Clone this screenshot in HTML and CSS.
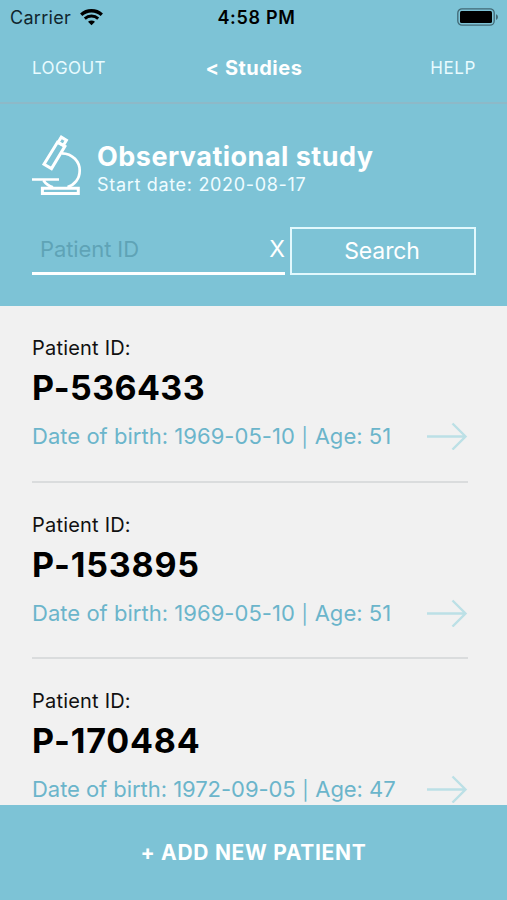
FILE: index.html
```
<!DOCTYPE html>
<html lang="en">
<head>
<meta charset="utf-8">
<title>Observational study</title>
<link rel="stylesheet" href="styles.css">
</head>
<body>
<div class="app">
  <header class="top">
    <div class="status">
      <div class="carrier">
        <span>Carrier</span>
        <svg class="wifi" width="23" height="17" viewBox="0 0 23 17" fill="none" stroke="#000">
          <path d="M1.200 5.800C7 .4 16 .4 21.800 5.800" stroke-width="3.300"/>
          <path d="M4.800 9.600C8.600 6.200 14.400 6.200 18.200 9.600" stroke-width="2.900"/>
          <path d="M8 12.800C10 11 13 11 15 12.800L11.500 16.200Z" fill="#000" stroke="none"/>
        </svg>
      </div>
      <span class="time">4:58 PM</span>
      <svg class="battery" width="42" height="19" viewBox="0 0 42 19">
        <rect x=".8" y=".8" width="36.400" height="16.400" rx="4.200" fill="none" stroke="#426975" stroke-width="1.300"/>
        <rect x="3" y="3" width="32" height="12" rx="1.500"/>
        <path d="M39 6.200C41.600 7 41.600 11 39 11.800Z" fill="#426975"/>
      </svg>
    </div>
    <nav class="nav">
      <a class="nav-link">LOGOUT</a>
      <a class="nav-title">&lt; Studies</a>
      <a class="nav-link help">HELP</a>
    </nav>
  </header>

  <section class="study">
    <div class="study-head">
      <svg class="microscope" width="50" height="62" viewBox="0 0 50 62" fill="none" stroke="#fff" stroke-width="3">
        <path d="M25.500 7.200L12 29.200 19.500 33.600 32.900 11.200Z"/>
        <path d="M26 7.500L29.300 2.100 34.400 5.200 31.300 10.400Z"/>
        <path d="M29.800 18.300C41 18.500 47.700 27 47.700 35.500C47.700 44 42.500 50 35.500 52M0 44.500H27M11.500 45.500C13.500 48.500 16.500 51 21 52.300" stroke-width="2.700"/>
        <path d="M10.400 53.200H46.300V58.600H10.400Z"/>
      </svg>
      <div class="study-text">
        <h1>Observational study</h1>
        <p>Start date: 2020-08-17</p>
      </div>
    </div>
    <div class="search">
      <div class="field"><span class="placeholder">Patient ID</span><span class="clear">X</span></div>
      <div class="button">Search</div>
    </div>
  </section>

  <main class="list">
    <article class="patient">
      <p class="label">Patient ID:</p>
      <h2>P-536433</h2>
      <div class="details">
        <p>Date of birth: 1969-05-10 <span class="bar">|</span> Age: 51</p>
        <svg class="arrow" width="41" height="28" viewBox="0 0 41 28"><path d="M0 14.500H38.500M25.500 1.500L38.500 14.500 25.500 27.500"/></svg>
      </div>
    </article>
    <article class="patient">
      <p class="label">Patient ID:</p>
      <h2 class="loose">P-153895</h2>
      <div class="details">
        <p>Date of birth: 1969-05-10 <span class="bar">|</span> Age: 51</p>
        <svg class="arrow" width="41" height="28" viewBox="0 0 41 28"><path d="M0 14.500H38.500M25.500 1.500L38.500 14.500 25.500 27.500"/></svg>
      </div>
    </article>
    <article class="patient">
      <p class="label">Patient ID:</p>
      <h2 class="loose">P-170484</h2>
      <div class="details">
        <p class="snug">Date of birth: 1972-09-05 <span class="bar">|</span> Age: 47</p>
        <svg class="arrow" width="41" height="28" viewBox="0 0 41 28"><path d="M0 14.500H38.500M25.500 1.500L38.500 14.500 25.500 27.500"/></svg>
      </div>
    </article>
  </main>

  <footer class="add">+ ADD NEW PATIENT</footer>
</div>
</body>
</html>
```
FILE: styles.css
```
* { box-sizing: border-box; margin: 0; padding: 0; }
body { font-family: Inter, "Liberation Sans", sans-serif; background: #f1f1f1; }
svg { display: block; flex: none; }

.app { display: flex; flex-direction: column; height: 900px; overflow: hidden; }

.top { height: 104px; flex: none; background: #7dc3d6; border-bottom: 2px solid #8db9c8; color: #fff; }
.status { display: grid; grid-template-columns: 1fr auto 1fr; align-items: center; height: 35px; padding: 0 8px 0 10px; color: #000; }
.carrier { display: flex; align-items: center; gap: 9px; font-size: 18px; letter-spacing: .3px; color: #10262e; }
.time { font-size: 18px; font-weight: 600; letter-spacing: .7px; padding-left: 4px; }
.battery { justify-self: end; }
.nav { display: grid; grid-template-columns: 1fr auto 1fr; align-items: center; height: 66px; padding: 0 31px 0 32px; }
.nav-link { font-size: 17px; letter-spacing: .4px; color: #e9fbff; }
.help { justify-self: end; letter-spacing: .6px; }
.nav-title { font-size: 20px; font-weight: 700; letter-spacing: .5px; }

.study { height: 202px; flex: none; padding: 31px 31px 0 32px; background: #7dc3d6; color: #fff; }
.study-head { display: flex; gap: 15px; height: 62px; }
.study-text { padding-top: 5px; }
h1 { font-size: 27px; line-height: 33px; font-weight: 700; letter-spacing: .48px; white-space: nowrap; }
.study-text p { font-size: 18px; line-height: 24px; letter-spacing: .68px; color: #effcff; }
.search { display: flex; gap: 5px; height: 48px; margin-top: 30px; }
.field { display: flex; justify-content: space-between; width: 253px; border-bottom: 3px solid #fff; padding-left: 8px; line-height: 44px; }
.placeholder { font-size: 22px; letter-spacing: -.1px; color: #5fa3b6; }
.clear { font-size: 23px; }
.button { flex: 1; border: 2px solid #e2f8fd; padding-right: 2px; font-size: 23px; letter-spacing: -.1px; line-height: 44px; text-align: center; }

.list { flex: 1; min-height: 0; overflow: hidden; padding: 0 39px 0 32px; }
.patient { height: 176.500px; padding-top: 30px; border-bottom: 2px solid #dadcdd; }
.label { font-size: 20px; line-height: 24px; letter-spacing: .2px; color: #111; }
h2 { font-size: 34px; line-height: 42px; margin-top: 7px; font-weight: 700; letter-spacing: .4px; color: #000; }
.loose { letter-spacing: .8px; }
.details { display: flex; justify-content: space-between; align-items: center; height: 28px; margin-top: 13px; }
.details p { font-size: 22px; letter-spacing: .03px; white-space: nowrap; color: #6bb5cb; }
.details .snug { letter-spacing: -.05px; }
.bar { font-size: 19px; padding: 0 .5px; }
.arrow path { fill: none; stroke: #bce0e6; stroke-width: 2.400; }

.add { height: 95px; flex: none; background: #7dc3d6; color: #fff; font-size: 21px; font-weight: 700; letter-spacing: .7px; line-height: 96px; text-align: center; }
```
